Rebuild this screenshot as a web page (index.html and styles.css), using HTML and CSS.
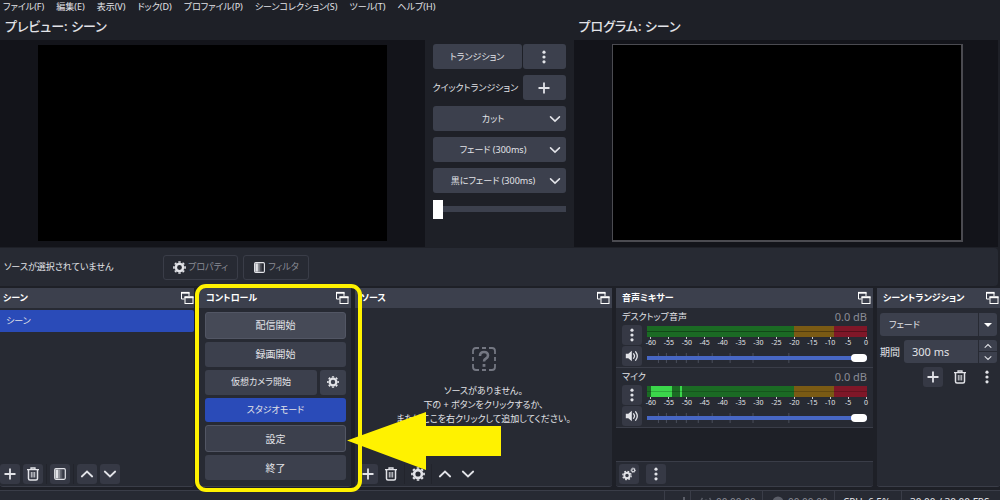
FILE: index.html
```html
<!DOCTYPE html>
<html lang="ja">
<head>
<meta charset="utf-8">
<title>OBS</title>
<link rel="stylesheet" href="styles.css">
</head>
<body>
<svg class="defs" aria-hidden="true">
  <symbol id="plus" viewBox="0 0 14 14"><path d="M7 1.5v11M1.5 7h11" stroke="currentColor" stroke-width="1.8"/></symbol>
  <symbol id="dots" viewBox="0 0 14 14"><g fill="currentColor"><circle cx="7" cy="2.2" r="1.6"/><circle cx="7" cy="7" r="1.6"/><circle cx="7" cy="11.8" r="1.6"/></g></symbol>
  <symbol id="down" viewBox="0 0 14 14"><path d="M1.8 4.5 7 9.5l5.200-5" fill="none" stroke="currentColor" stroke-width="1.800" stroke-linecap="round"/></symbol>
  <symbol id="up" viewBox="0 0 14 14"><path d="M1.800 9.500 7 4.500l5.200 5" fill="none" stroke="currentColor" stroke-width="1.800" stroke-linecap="round"/></symbol>
  <symbol id="trash" viewBox="0 0 14 14"><g fill="none" stroke="currentColor"><path d="M1 2.700h12M5 2.500V1h4v1.500" stroke-width="1.300"/><path d="M2.500 3v8.500q0 1.500 1.500 1.500h6q1.500 0 1.500-1.500V3" stroke-width="1.500"/><path d="M5.300 5v5.500M7 5v5.500M8.700 5v5.500" stroke-width=".9"/></g></symbol>
  <symbol id="gear" viewBox="0 0 14 14"><circle cx="7" cy="7" r="3.900" fill="none" stroke="currentColor" stroke-width="2.600"/><path d="M5.700 1h2.600M5.700 13h2.600M1 5.700v2.600M13 5.700v2.600M1.900 3.700l1.800-1.800M10.300 1.900l1.800 1.800M1.900 10.300l1.800 1.800M12.100 10.300l-1.800 1.800" stroke="currentColor" stroke-width="1.700"/></symbol>
  <symbol id="gears" viewBox="0 0 14 14"><g fill="none" stroke="currentColor"><circle cx="5" cy="8.500" r="2.700" stroke-width="1.900"/><circle cx="5" cy="8.500" r="4.200" stroke-width="1.300" stroke-dasharray="1.700 1.600"/><circle cx="11.200" cy="3.200" r="1.500" stroke-width="1.100"/><circle cx="11.200" cy="3.200" r="2.300" stroke-width=".8" stroke-dasharray="1 .8"/></g></symbol>
  <symbol id="filter" viewBox="0 0 14 14"><rect x="1.700" y="1.700" width="10.600" height="10.600" rx="1.200" fill="none" stroke="currentColor" stroke-width="1.200"/><rect x="2.500" y="2.500" width="2.800" height="9" fill="currentColor"/><rect x="5.300" y="2.500" width="2" height="9" fill="currentColor" opacity=".55"/><rect x="7.300" y="2.500" width="2" height="9" fill="currentColor" opacity=".2"/></symbol>
  <symbol id="float" viewBox="0 0 14 14"><path d="M4.500 8H1.500V1.500H9V5" fill="none" stroke="currentColor"/><path d="M1 1.800h8.500" stroke="currentColor" stroke-width="1.800"/><rect x="5" y="6" width="8" height="6.500" fill="none" stroke="currentColor"/><path d="M4.500 6.300h9" stroke="currentColor" stroke-width="1.800"/></symbol>
  <symbol id="speaker" viewBox="0 0 14 14"><path d="M.8 4.800h2.500L6.800 1.700v10.600L3.300 9.200H.8z" fill="currentColor"/><path d="M8.600 4.800q1.800 2.200 0 4.400M10.700 2.800q3.200 4.200 0 8.400" fill="none" stroke="currentColor" stroke-width="1.300" stroke-linecap="round"/></symbol>
  <symbol id="volmarks" viewBox="0 0 221 12"><path d="M11.500 1v10M19.500 1v10M29.500 1v10M39.500 1v10M51.500 1v10M65.500 1v10M83.500 1v10M106.500 1v10M142.500 1v10" stroke="#4b4f5c"/></symbol>
</svg>

<div class="app">
  <nav class="menu">
    <a href="#">ファイル(F)</a><a href="#">編集(E)</a><a href="#">表示(V)</a><a href="#">ドック(D)</a><a href="#">プロファイル(P)</a><a href="#">シーンコレクション(S)</a><a href="#">ツール(T)</a><a href="#">ヘルプ(H)</a>
  </nav>

  <main class="studio">
    <section class="view">
      <h1>プレビュー: シーン</h1>
      <div class="stage"><div class="canvas"></div></div>
    </section>
    <section class="quick">
      <div class="pair"><button class="btn grow">トランジション</button><button class="btn small" aria-label="メニュー"><svg class="ic"><use href="#dots"/></svg></button></div>
      <div class="pair"><span class="grow">クイックトランジション</span><button class="btn small" aria-label="追加"><svg class="ic"><use href="#plus"/></svg></button></div>
      <button class="btn drop"><span>カット</span><svg class="ic chev"><use href="#down"/></svg></button>
      <button class="btn drop"><span>フェード (300ms)</span><svg class="ic chev"><use href="#down"/></svg></button>
      <button class="btn drop"><span>黒にフェード (300ms)</span><svg class="ic chev"><use href="#down"/></svg></button>
      <input class="tbar" type="range" value="0" aria-label="トランジション">
    </section>
    <section class="view program">
      <h1>プログラム: シーン</h1>
      <div class="stage"><div class="canvas live"></div></div>
    </section>
  </main>

  <div class="context">
    <span class="none">ソースが選択されていません</span>
    <button class="ghost"><svg class="ic"><use href="#gear"/></svg>プロパティ</button>
    <button class="ghost"><svg class="ic"><use href="#filter"/></svg>フィルタ</button>
  </div>

  <div class="docks">
    <section class="dock">
      <h2>シーン<svg class="ic"><use href="#float"/></svg></h2>
      <ul class="scenes"><li>シーン</li></ul>
      <div class="tools">
        <button class="tool" aria-label="追加"><svg class="ic"><use href="#plus"/></svg></button>
        <button class="tool" aria-label="削除"><svg class="ic"><use href="#trash"/></svg></button>
        <i></i>
        <button class="tool" aria-label="フィルタ"><svg class="ic"><use href="#filter"/></svg></button>
        <i></i>
        <button class="tool" aria-label="上へ"><svg class="ic"><use href="#up"/></svg></button>
        <button class="tool" aria-label="下へ"><svg class="ic"><use href="#down"/></svg></button>
      </div>
    </section>

    <section class="dock marked">
      <h2>コントロール<svg class="ic"><use href="#float"/></svg></h2>
      <div class="controls">
        <button class="btn edge light">配信開始</button>
        <button class="btn">録画開始</button>
        <div class="cam"><button class="btn grow kana">仮想カメラ開始</button><button class="btn cog" aria-label="設定"><svg class="ic"><use href="#gear"/></svg></button></div>
        <button class="btn active kana">スタジオモード</button>
        <button class="btn edge">設定</button>
        <button class="btn">終了</button>
      </div>
      <div class="frame"></div>
      <svg class="arrow" viewBox="0 0 154 58"><path d="M0 28.500 79 0v14h75v30H79v14z" fill="#fff200"/></svg>
    </section>

    <section class="dock sources">
      <h2>ソース<svg class="ic"><use href="#float"/></svg></h2>
      <div class="empty">
        <svg class="ask" viewBox="0 0 24 24" fill="none" stroke="#747782" stroke-width="1.800"><path d="M1 7V4q0-3 3-3h3M10 1h4M17 1h3q3 0 3 3v3M23 10v4M23 17v3q0 3-3 3h-3M14 23h-4M7 23H4q-3 0-3-3v-3M1 14v-4"/><path d="M8 9q0-4 4-4t4 3.500q0 2-2 3t-2 3" stroke-width="2.600"/><path d="M12 17v2.800" stroke-width="2.800"/></svg>
        <p>ソースがありません。<br>下の + ボタンをクリックするか、<br>またはここを右クリックして追加してください。</p>
      </div>
      <div class="tools">
        <button class="tool" aria-label="追加"><svg class="ic"><use href="#plus"/></svg></button>
        <button class="tool flat" aria-label="削除"><svg class="ic"><use href="#trash"/></svg></button>
        <i></i>
        <button class="tool flat" aria-label="設定"><svg class="ic"><use href="#gear"/></svg></button>
        <i></i>
        <button class="tool flat" aria-label="上へ"><svg class="ic"><use href="#up"/></svg></button>
        <button class="tool flat" aria-label="下へ"><svg class="ic"><use href="#down"/></svg></button>
      </div>
    </section>

    <section class="dock">
      <h2>音声ミキサー<svg class="ic"><use href="#float"/></svg></h2>
      <div class="strip">
        <div class="name"><label for="v1">デスクトップ音声</label><span>0.0 dB</span></div>
        <div class="chan">
          <div class="side"><button class="tool" aria-label="メニュー"><svg class="ic"><use href="#dots"/></svg></button><button class="tool" aria-label="ミュート"><svg class="ic"><use href="#speaker"/></svg></button></div>
          <div class="levels">
            <div class="meter"></div>
            <div class="scale"><span>-60</span><span>-55</span><span>-50</span><span>-45</span><span>-40</span><span>-35</span><span>-30</span><span>-25</span><span>-20</span><span>-15</span><span>-10</span><span>-5</span><span>0</span></div>
            <div class="fader"><svg><use href="#volmarks"/></svg><input id="v1" type="range" value="100"></div>
          </div>
        </div>
      </div>
      <div class="strip">
        <div class="name"><label for="v2">マイク</label><span>0.0 dB</span></div>
        <div class="chan">
          <div class="side"><button class="tool" aria-label="メニュー"><svg class="ic"><use href="#dots"/></svg></button><button class="tool" aria-label="ミュート"><svg class="ic"><use href="#speaker"/></svg></button></div>
          <div class="levels">
            <div class="meter on"></div>
            <div class="scale"><span>-60</span><span>-55</span><span>-50</span><span>-45</span><span>-40</span><span>-35</span><span>-30</span><span>-25</span><span>-20</span><span>-15</span><span>-10</span><span>-5</span><span>0</span></div>
            <div class="fader"><svg><use href="#volmarks"/></svg><input id="v2" type="range" value="100"></div>
          </div>
        </div>
      </div>
      <div class="blank"></div>
      <div class="tools wide">
        <button class="tool" aria-label="詳細設定"><svg class="ic"><use href="#gears"/></svg></button>
        <button class="tool" aria-label="メニュー"><svg class="ic"><use href="#dots"/></svg></button>
      </div>
    </section>

    <section class="dock last">
      <h2>シーントランジション<svg class="ic"><use href="#float"/></svg></h2>
      <div class="trans">
        <div class="combo">
          <select aria-label="トランジション"><option>フェード</option></select>
          <svg class="tri" viewBox="0 0 8 4"><path d="M0 0h8L4 4z" fill="#fff"/></svg>
        </div>
        <div class="time">
          <label for="dur">期間</label>
          <div class="spin">
            <input id="dur" type="text" value="300 ms">
            <div class="step"><button aria-label="増やす"><svg><use href="#up"/></svg></button><button aria-label="減らす"><svg><use href="#down"/></svg></button></div>
          </div>
        </div>
        <div class="acts">
          <button class="tool" aria-label="追加"><svg class="ic"><use href="#plus"/></svg></button>
          <button class="tool flat" aria-label="削除"><svg class="ic"><use href="#trash"/></svg></button>
          <button class="tool flat" aria-label="メニュー"><svg class="ic"><use href="#dots"/></svg></button>
        </div>
      </div>
    </section>
  </div>

  <footer class="status">
    <div class="bars"><svg viewBox="0 0 14 14"><path d="M3 14v-3M7 14V8M11 14V2" stroke="#5b5e68" stroke-width="2"/></svg></div>
    <div class="clock"><svg viewBox="0 0 14 14"><circle cx="7" cy="7" r="2.500" fill="#5b5e68"/><path d="M3.500 3q-3 4 0 8M10.500 3q3 4 0 8" fill="none" stroke="#5b5e68" stroke-width="1.500"/></svg>00:00:00</div>
    <div class="clock"><svg viewBox="0 0 14 14"><circle cx="7" cy="7" r="5.500" fill="#5b5e68"/></svg>00:00:00</div>
    <div class="cpu">CPU: 6.5%</div>
    <div class="fps">30.00 / 30.00 FPS</div>
  </footer>
</div>
</body>
</html>
```
FILE: styles.css
```css
* { box-sizing: border-box; }
body {
  margin: 0;
  background: #1e2027;
  color: #e2e3e8;
  font: 9px/14px "Noto Sans", "Noto Sans CJK JP", sans-serif;
  font-feature-settings: "palt";
}
button, input, select { font: inherit; font-feature-settings: inherit; color: inherit; margin: 0; padding: 0; border: 0; }
h1, h2, p, ul { margin: 0; padding: 0; font-weight: 400; list-style: none; }
.defs { display: none; }
.ic { width: 14px; height: 14px; flex: none; display: block; }
.grow { flex: 1; }

.app { height: 100vh; overflow: hidden; display: flex; flex-direction: column; }

.menu { display: flex; gap: 12px; padding-left: 3px; line-height: 13px; white-space: nowrap; }
.menu a { color: inherit; text-decoration: none; }

.studio { display: grid; grid-template-columns: 1fr 149px 1fr; padding-right: 2px; }
.view { display: flex; flex-direction: column; }
.view h1 { padding-left: 5px; font-size: 13px; font-weight: 500; line-height: 27px; white-space: nowrap; }
.stage { flex: 1; padding: 5px 38px 6px; background: #13141a; }
.program .stage { padding: 4px 35px 4px 38px; }
.canvas { aspect-ratio: 16 / 9; background: #000; }
.live { border: solid #4b4b51; border-width: 1px 2px 2px 1px; }

.quick { display: flex; flex-direction: column; gap: 6px; padding: 31px 8px 0; }
.pair { display: flex; align-items: center; gap: 1px; white-space: nowrap; }
.btn {
  height: 25px; background: #3c404d; border-radius: 3px; white-space: nowrap;
  display: flex; align-items: center; justify-content: center;
}
.small { width: 43px; }
.drop { padding-right: 5px; }
.drop span { flex: 1; padding-left: 5px; }
.chev { width: 12px; height: 12px; }
.tbar { appearance: none; width: 100%; height: 20px; background: linear-gradient(#3c404d, #3c404d) center / 100% 6px no-repeat; }
.tbar::-webkit-slider-thumb { appearance: none; width: 10px; height: 19px; background: #fff; }

.context {
  display: flex; align-items: center; gap: 5px; height: 38px; margin: 1px 2px 2px 0; padding-left: 4px;
  background: #272a33; border-radius: 0 4px 4px 0;
}
.none { width: 154px; }
.ghost {
  display: flex; align-items: center; gap: 2px; height: 25px; padding: 0 9px;
  background: none; border: 1px solid #3a3d48; border-radius: 3px; color: #8b8d96;
}
.ghost .ic { width: 13px; height: 13px; color: #e2e3e8; }

.docks { flex: 1; min-height: 198px; display: grid; grid-template-columns: 194fr 153fr 257fr 257fr 123fr; gap: 4px; }
.dock { display: flex; flex-direction: column; min-width: 0; background: #272a33; border-bottom: 1px solid #3a3d48; border-radius: 0 0 3px 3px; }
.dock h2 {
  display: flex; align-items: center; justify-content: space-between; height: 20px; padding: 0 2px 0 6px;
  background: #3c404d; font-size: 9px; font-weight: 600; white-space: nowrap; color: #fff;
}
.dock:first-child h2 { padding: 0 0 0 3px; }
.marked h2 { padding-left: 8px; }
.last h2 { padding-right: 1px; }

.scenes { flex: 1; padding-top: 2px; }
.scenes li { padding: 4px 6px; background: #2a4bb8; border-radius: 0 2px 2px 0; }
.tools { display: flex; align-items: center; gap: 3px; padding: 0 0 2px; }
.sources .tools { padding-left: 3px; }
.tools i { width: 1px; height: 20px; background: #22242c; }
.tool { width: 20px; height: 20px; display: grid; place-items: center; background: #363945; border-radius: 3px; }
.flat { background: none; }

.marked { position: relative; }
.controls { flex: 1; display: flex; flex-direction: column; gap: 3px; padding: 4px 5px 6px 7px; font-size: 10px; }
.controls > * { flex: 1; }
.controls .kana { font-size: 9px; }
.cam { display: flex; gap: 3px; }
.cam .btn { height: auto; }
.cog { width: 26px; }
.cog .ic { width: 12px; height: 12px; }
.edge { border: 1px solid #525664; }
.light { background: #464a57; }
.active { background: #2a4bb8; }
.frame { position: absolute; inset: -4px -11px -6px -3px; z-index: 1; border: 4px solid #fff200; border-radius: 11px; }
.arrow { position: absolute; left: 149px; top: 124px; width: 154px; height: 58px; z-index: 2; }

.empty { flex: 1; display: flex; flex-direction: column; align-items: center; justify-content: center; gap: 13px; text-align: center; white-space: nowrap; }
.ask { width: 24px; height: 24px; }

.strip { height: 60px; padding: 2px 6px 0; border-bottom: 1px solid #3a3d48; }
.name { display: flex; justify-content: space-between; }
.name span { color: #8b8d96; font-size: 11px; }
.chan { display: flex; gap: 5px; margin-top: 1px; }
.side { display: grid; gap: 1px; }
.levels { flex: 1; min-width: 0; padding-top: 1px; }
.meter {
  height: 11px;
  background:
    linear-gradient(#0005, #0005) center / 100% 1px no-repeat,
    linear-gradient(90deg, #1b6a24 67%, #7a5a14 67% 85%, #7f1728 85%);
}
.on {
  background:
    linear-gradient(#0003, #0003) center / 100% 1px no-repeat,
    linear-gradient(90deg, #1b6a24 4px, #3bd64b 4px 25px, #1b6a24 25px 33px, #3bd64b 33px 35px, #0000 35px),
    linear-gradient(90deg, #1b6a24 67%, #7a5a14 67% 85%, #7f1728 85%);
}
.scale { display: grid; grid-template-columns: repeat(13, 1fr); margin: 0 -8px 0 -5px; font-size: 7px; line-height: 8px; text-align: center; }
.scale span::before { content: ""; display: block; width: 1px; height: 2px; margin: 0 auto; background: #c9cad0; }
.fader { position: relative; height: 12px; margin-top: 5px; }
.fader svg { position: absolute; inset: 0; width: 100%; height: 100%; }
.fader input { position: relative; display: block; appearance: none; width: 100%; height: 12px; background: linear-gradient(#4767c4, #4767c4) center / 100% 4px no-repeat; }
.fader input::-webkit-slider-thumb { appearance: none; width: 16px; height: 8px; border-radius: 4px; background: #fff; }
.blank { flex: 1; background: #1e2027; border-bottom: 1px solid #3a3d48; }
.wide { gap: 7px; padding: 2px 3px; }

.trans { padding: 5px 3px; display: grid; grid-template-columns: minmax(0, 1fr); gap: 4px; }
.combo { position: relative; height: 23px; background: #3c404d; border-radius: 3px; }
.combo select { appearance: none; width: 100%; height: 100%; padding-left: 9px; background: linear-gradient(#272a33, #272a33) right 18px center / 1px 100% no-repeat; }
.tri { position: absolute; right: 5px; top: 10px; width: 8px; height: 4px; }
.time { display: flex; align-items: center; gap: 4px; white-space: nowrap; font-size: 10px; }
.spin { flex: 1; min-width: 0; display: flex; height: 23px; background: #3c404d; border-radius: 3px; }
.spin input { flex: 1; min-width: 0; width: 0; padding-left: 8px; background: none; font-size: 11px; }
.step { width: 19px; display: grid; border-left: 1px solid #272a33; }
.step button { display: grid; place-items: center; background: none; }
.step button + button { border-top: 1px solid #272a33; }
.step svg { width: 8px; height: 8px; }
.acts { display: flex; justify-content: flex-end; gap: 7px; }

.status { display: flex; justify-content: flex-end; flex: none; height: 22px; margin: 3px 0 -12px; border-top: 1px solid #3a3d48; background: #272a33; white-space: nowrap; font-size: 10px; }
.status div { display: flex; align-items: center; gap: 3px; padding: 0 8px; border-left: 1px solid #3a3d48; }
.status svg { width: 14px; height: 14px; flex: none; }
.status .bars { width: 26px; }
.status .clock { width: 72px; color: #8b8d96; }
.status .cpu { width: 67px; }
.status .fps { width: 99px; }
```
